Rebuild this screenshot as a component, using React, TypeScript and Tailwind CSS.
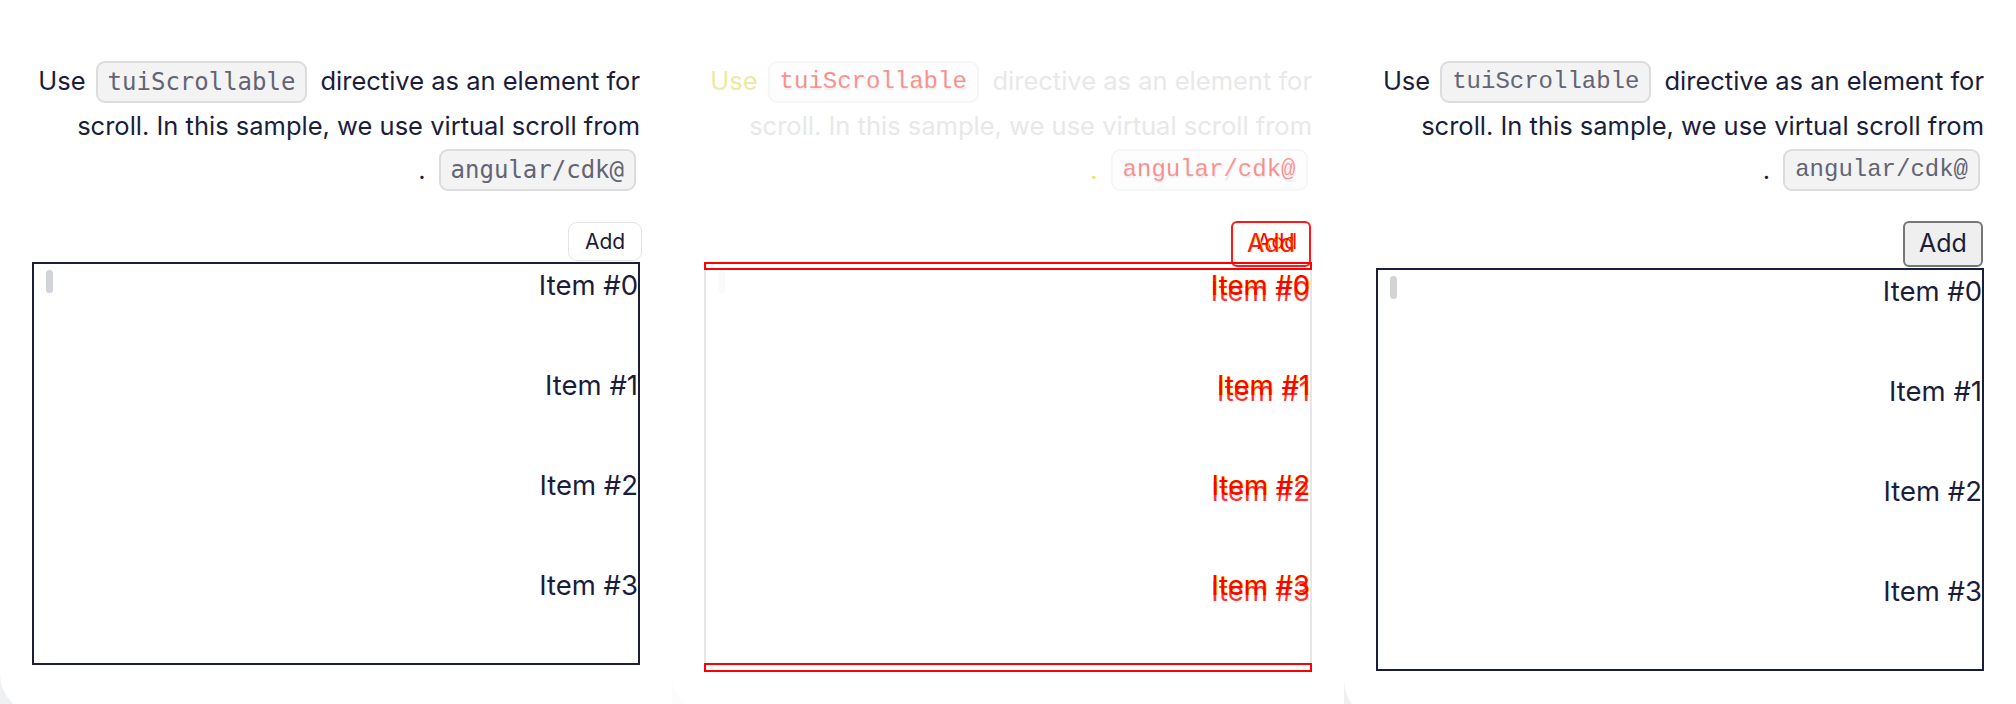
import type { ReactNode } from 'react'

type Mode = 'a' | 'diff' | 'b'

const items = ['Item #0', 'Item #1', 'Item #2', 'Item #3']

function Chip({ mode, className, children }: { mode: Mode; className?: string; children: ReactNode }) {
  const face =
    mode === 'b'
      ? "font-['Liberation_Mono',monospace]"
      : "font-['DejaVu_Sans_Mono',monospace]"
  const skin =
    mode === 'diff'
      ? 'border-[#f6f6f6] bg-[#fdfdfd] text-[#efefef]'
      : 'border-[#dcdcdf] bg-[#f3f3f4] text-[#626475]'
  return (
    <span
      className={`relative flex h-[42px] items-center rounded-[9px] border-2 px-[10px] text-[24px] ${face} ${skin} ${className ?? ''}`}
    >
      {children}
      {mode === 'diff' && (
        <span className="absolute inset-0 flex items-center px-[10px] font-['Liberation_Mono',monospace] text-[#ff0000] opacity-40">
          {children}
        </span>
      )}
    </span>
  )
}

function AddButton({ mode }: { mode: Mode }) {
  if (mode === 'b') {
    return (
      <div className="mt-[30px] flex justify-end">
        <button className="mr-[1px] flex h-[46px] w-[80px] items-center justify-center rounded-[6px] border-2 border-[#767676] bg-[#efefef] text-[25px] text-[#1b1d3a]">
          Add
        </button>
      </div>
    )
  }
  const diff = mode === 'diff'
  return (
    <div className="relative mt-[31px] flex justify-end">
      <button
        className={`mr-[-2px] flex h-[39px] w-[74px] items-center justify-center rounded-[9px] border bg-white text-[21px] ${
          diff ? 'border-[#fafafa] text-[#ff0000]' : 'border-[#e3e3e6] text-[#1b1d3a]'
        }`}
      >
        Add
      </button>
      {diff && (
        <div className="absolute right-[1px] top-[-1px] flex h-[46px] w-[80px] items-center justify-center rounded-[6px] border-2 border-[#ff0000] text-[25px] text-[#ff0000] opacity-90">
          <span className="[text-shadow:1px_0_0_#ffe600]">Add</span>
        </div>
      )}
    </div>
  )
}

function Panel({ mode }: { mode: Mode }) {
  const diff = mode === 'diff'
  const ink = diff ? 'text-[#e8e8e8]' : 'text-[#1b1d3a]'
  return (
    <div className={`h-[704px] w-[672px] overflow-hidden ${diff ? 'bg-[#fcfcfc]' : 'bg-[#eef0f2]'}`}>
      <div className="flex flex-col rounded-bl-[40px] bg-white px-[32px] pb-[49px] pt-[60px]">
        <div className={`flex flex-col items-end font-['Inter',sans-serif] text-[25.5px] ${ink}`}>
          <div className="flex h-[43px] items-center whitespace-pre">
            <span className={diff ? 'text-[#eee9a4]' : ''}>Use</span>
            <Chip mode={mode} className="ml-[10px] mr-[13px]">
              tuiScrollable
            </Chip>
            <span>directive as an element for</span>
          </div>
          <div className="flex h-[46px] items-center whitespace-pre">
            scroll. In this sample, we use virtual scroll from
          </div>
          <div className="flex h-[42px] items-center">
            <span className={diff ? 'text-[#f0e26a]' : ''}>.</span>
            <Chip mode={mode} className="ml-[13px] mr-[4px]">
              angular/cdk@
            </Chip>
          </div>
        </div>

        <div className="font-['Inter',sans-serif]">
          <AddButton mode={mode} />
        </div>

        <div
          className={`relative mt-[1px] h-[403px] border-2 font-['Inter',sans-serif] ${
            diff ? 'border-[#e6e6e6]' : 'border-[#1b1d3a]'
          }`}
        >
          <div
            className={`absolute left-[12px] top-[6px] h-[23px] w-[7px] rounded-full ${
              diff ? 'bg-[#fafafa]' : 'bg-[#d1d3d9]'
            }`}
          />
          {diff && (
            <>
              <div className="absolute left-[-2px] right-[-2px] top-[-2px] h-[8px] border-2 border-[#ff0000]" />
              <div className="absolute left-[-2px] right-[-2px] top-[399px] h-[9px] border-2 border-[#ff0000]" />
            </>
          )}
          <div className="flex flex-col items-end">
            {items.map((item) => (
              <div key={item} className="relative h-[100px] text-[27.5px] leading-[42px]">
                {diff ? (
                  <>
                    <span className="text-[#ff0000] [text-shadow:1px_0_0_#ffe600]">{item}</span>
                    <span className="absolute right-0 top-[6px] text-[#ff0000] opacity-80">{item}</span>
                  </>
                ) : (
                  <span className={ink}>{item}</span>
                )}
              </div>
            ))}
          </div>
        </div>
      </div>
    </div>
  )
}

export default function App() {
  return (
    <div className="flex h-[704px] w-[2016px] overflow-hidden bg-white">
      <Panel mode="a" />
      <Panel mode="diff" />
      <Panel mode="b" />
    </div>
  )
}
